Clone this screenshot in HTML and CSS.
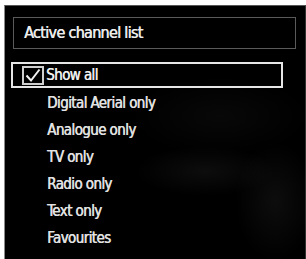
FILE: index.html
```html
<!DOCTYPE html>
<html lang="en">

<head>
  <meta charset="UTF-8">
  <meta name="viewport" content="width=device-width, initial-scale=1.0">
  <title>Active channel list</title>
  <link rel="stylesheet" href="styles.css">
</head>

<body>
  <div class="panel">
    <div class="title">Active channel list</div>
    <ul class="list">
      <li class="current">
        <span class="check">
          <svg width="18" height="15" viewBox="0 0 18 15">
            <path d="M2.5 7.5 L7 12.5 L15.5 1.5" fill="none" stroke="#f2f2f2" stroke-width="2" />
          </svg>
        </span>
        Show all
      </li>
      <li>Digital Aerial only</li>
      <li>Analogue only</li>
      <li>TV only</li>
      <li>Radio only</li>
      <li>Text only</li>
      <li>Favourites</li>
    </ul>
  </div>
</body>

</html>
```
FILE: styles.css
```css
* {
  margin: 0;
  padding: 0;
  box-sizing: border-box;
}

body {
  background-color: #fff;
  font-family: "DejaVu Sans Condensed", "DejaVu Sans", sans-serif;
  font-stretch: condensed;
}

li {
  list-style: none;
}

.panel {
  margin: 5px 0 0 4px;
  height: 254px;
  padding: 11px 9px 0 8px;
  background-color: #000;
  background-image:
    radial-gradient(ellipse 70px 25px at 200px 165px, rgba(255, 255, 255, 0.05), transparent),
    radial-gradient(ellipse 40px 60px at 270px 195px, rgba(255, 255, 255, 0.05), transparent),
    radial-gradient(ellipse 90px 40px at 215px 110px, rgba(255, 255, 255, 0.03), transparent);
  border-left: 1px solid #8a8a8a;
  border-top: 1px solid #555;
  border-right: 1px solid #333;
}

.title {
  height: 32px;
  border: 1px solid #5a5a5a;
  padding-left: 10px;
  line-height: 30px;
  font-size: 16px;
  letter-spacing: -0.7px;
  color: #ececec;
  text-shadow: 0.5px 0 0 #ececec;
}

.list {
  margin-top: 13px;
}

.list li {
  height: 27px;
  line-height: 27px;
  padding-left: 34px;
  font-size: 15px;
  letter-spacing: -0.6px;
  color: #e2e2e2;
  text-shadow: 0.5px 0 0 #e2e2e2;
}

.list .current {
  display: flex;
  align-items: center;
  height: 26px;
  width: 272px;
  margin: 0 0 2px -2px;
  padding-left: 9px;
  border: 2px solid #e6e6e6;
  color: #f0f0f0;
}

.check {
  display: flex;
  align-items: center;
  justify-content: center;
  flex-shrink: 0;
  width: 22px;
  height: 19px;
  margin-right: 2px;
  border: 2px solid #cfcfcf;
}
```
